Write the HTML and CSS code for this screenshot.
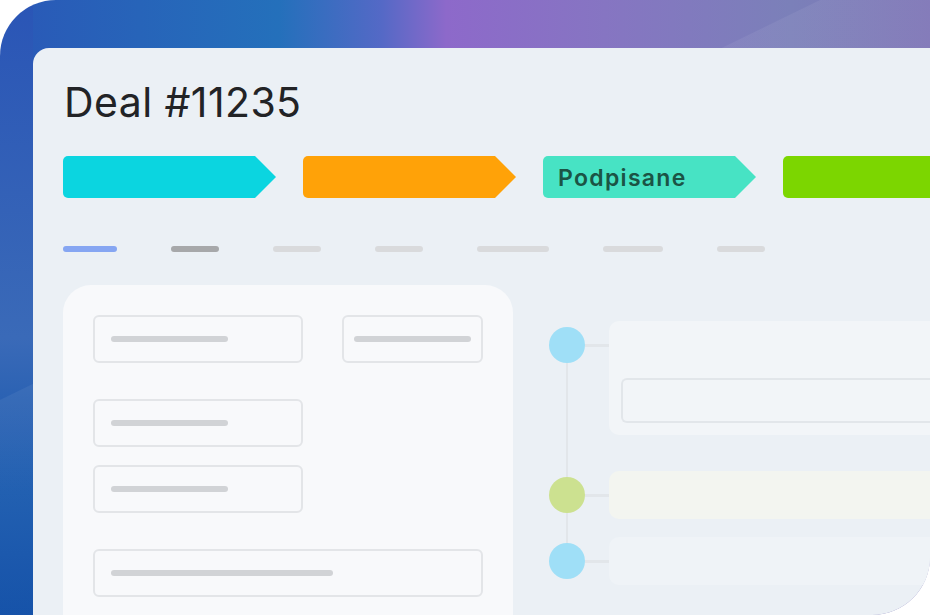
FILE: index.html
```html
<!DOCTYPE html>
<html>

<head>
    <title>Deal #11235</title>
    <meta charset="UTF-8">
    <meta name="viewport" content="width=device-width, initial-scale=1.0">
    <link rel="stylesheet" href="styles.css">
</head>

<body>
    <div class="frame">
        <div class="panel">
            <h1 class="title">Deal #11235</h1>

            <div class="stages">
                <div class="stage stage-new"></div>
                <div class="stage stage-offer"></div>
                <div class="stage stage-signed">Podpisane</div>
                <div class="stage stage-won"></div>
            </div>

            <div class="tabs">
                <span class="tab tab-active" style="width: 54px"></span>
                <span class="tab tab-hover" style="width: 48px"></span>
                <span class="tab" style="width: 48px"></span>
                <span class="tab" style="width: 48px"></span>
                <span class="tab" style="width: 72px"></span>
                <span class="tab" style="width: 60px"></span>
                <span class="tab" style="width: 48px"></span>
            </div>

            <div class="content">
                <section class="form-card">
                    <div class="field"><span class="line" style="width: 117px"></span></div>
                    <div class="field"><span class="line" style="width: 117px"></span></div>
                    <div class="field field-gap"><span class="line" style="width: 117px"></span></div>
                    <div class="field field-tight"><span class="line" style="width: 117px"></span></div>
                    <div class="field field-wide field-gap"><span class="line" style="width: 222px"></span></div>
                </section>

                <section class="timeline">
                    <div class="event event-top">
                        <span class="dot dot-blue"></span>
                        <span class="link"></span>
                        <div class="event-card event-card-note">
                            <div class="note-box"></div>
                        </div>
                    </div>
                    <div class="event">
                        <span class="dot dot-green"></span>
                        <span class="link"></span>
                        <div class="event-card event-card-green"></div>
                    </div>
                    <div class="event event-last">
                        <span class="dot dot-blue"></span>
                        <span class="link"></span>
                        <div class="event-card"></div>
                    </div>
                </section>
            </div>
        </div>
    </div>
</body>

</html>
```

FILE: styles.css
```css
body {
    margin: 0;
    background: #FFFFFF;
    font-family: Inter, "Noto Sans", sans-serif;
}

/* Outer gradient frame, only its top and left edges show. */
.frame {
    width: 930px;
    height: 615px;
    box-sizing: border-box;
    padding: 48px 0 0 33px;
    border-radius: 56px 0 58px 0;
    overflow: hidden;
    background:
        /* Faint glossy sheen across the corner. */
        linear-gradient(154deg, rgba(255, 255, 255, 0) 359px, rgba(255, 255, 255, 0.06) 360px),
        linear-gradient(180deg, #2A55B6 0%, #3A6AB8 55%, #1456AC 80%, #0848A4 100%) 0 0 / 33px 100% no-repeat,
        linear-gradient(90deg, #2A58B7 0%, #2470BB 30%, #5469C6 41%, #8D69CA 48%, #8675C2 65%, #7B80B9 85%, #7D74B6 100%);
}

.panel {
    height: 100%;
    box-sizing: border-box;
    padding: 0 0 0 30px;
    border-radius: 16px 0 0 0;
    background: #EBF0F5;
    overflow: hidden;
}

.title {
    margin: 29px 0 0 1px;
    font-size: 41px;
    line-height: 50px;
    font-weight: 400;
    letter-spacing: 0.01em;
    color: #222326;
}

/* Pipeline chevrons */
.stages {
    display: flex;
    gap: 27px;
    margin-top: 29px;
}

.stage {
    flex: none;
    width: 213px;
    height: 42px;
    box-sizing: border-box;
    padding-left: 15px;
    border-radius: 5px 0 0 5px;
    clip-path: polygon(0 0, 192px 0, 100% 50%, 192px 100%, 0 100%);
    font-size: 23px;
    font-weight: 600;
    letter-spacing: 1.3px;
    line-height: 44px;
    color: #1B5445;
}

.stage-new {
    background: #0BD5E0;
}

.stage-offer {
    background: #FFA208;
}

.stage-signed {
    background: #47E3C4;
}

.stage-won {
    background: #7CD600;
}

/* Tab placeholders */
.tabs {
    display: flex;
    gap: 54px;
    margin-top: 48px;
}

.tab {
    height: 6px;
    border-radius: 3px;
    background: #D9DADC;
}

.tab-active {
    background: #86A6F2;
}

.tab-hover {
    background: #A7A8AA;
}

.content {
    display: flex;
    gap: 36px;
    margin-top: 33px;
}

/* Left form */
.form-card {
    flex: none;
    width: 450px;
    height: 360px;
    box-sizing: border-box;
    padding: 30px;
    border-radius: 28px 28px 0 0;
    background: #F8F9FB;
    display: grid;
    grid-template-columns: 210px 141px;
    column-gap: 39px;
    align-content: start;
}

.field {
    height: 48px;
    box-sizing: border-box;
    padding-left: 16px;
    border: 2px solid #E3E5E8;
    border-radius: 6px;
    display: flex;
    align-items: center;
}

.field:nth-child(2) {
    padding-left: 10px;
}

.field-gap {
    grid-column: 1;
    margin-top: 36px;
}

.field-tight {
    grid-column: 1;
    margin-top: 18px;
}

.field-wide {
    grid-column: 1 / 3;
}

.line {
    height: 6px;
    border-radius: 3px;
    background: #D1D3D6;
}

/* Activity timeline */
.timeline {
    position: relative;
    flex: none;
    width: 420px;
    padding-top: 36px;
}

.timeline::before {
    content: "";
    position: absolute;
    left: 17px;
    top: 60px;
    width: 2px;
    height: 216px;
    background: #E2E6EA;
}

.event {
    display: flex;
    align-items: center;
    margin-top: 18px;
}

.event-top {
    align-items: flex-start;
    margin-top: 0;
}

.event-top + .event {
    margin-top: 36px;
}

.dot {
    position: relative;
    flex: none;
    width: 36px;
    height: 36px;
    border-radius: 50%;
}

.event-top .dot {
    margin-top: 6px;
}

.dot-blue {
    background: #9FDFF7;
}

.dot-green {
    background: #CCE190;
}

.link {
    flex: none;
    width: 24px;
    height: 3px;
    background: #E2E6EA;
}

.event-top .link {
    margin-top: 23px;
}

.event-card {
    flex: 1;
    height: 48px;
    border-radius: 10px;
    background: #EFF3F7;
}

.event-card-note {
    height: auto;
    box-sizing: border-box;
    padding: 57px 0 12px 12px;
    background: #F2F5F8;
}

.event-card-green {
    background: #F3F5F0;
}

.note-box {
    height: 45px;
    box-sizing: border-box;
    border: 2px solid #E2E6EA;
    border-right: none;
    border-radius: 6px 0 0 6px;
}
```
